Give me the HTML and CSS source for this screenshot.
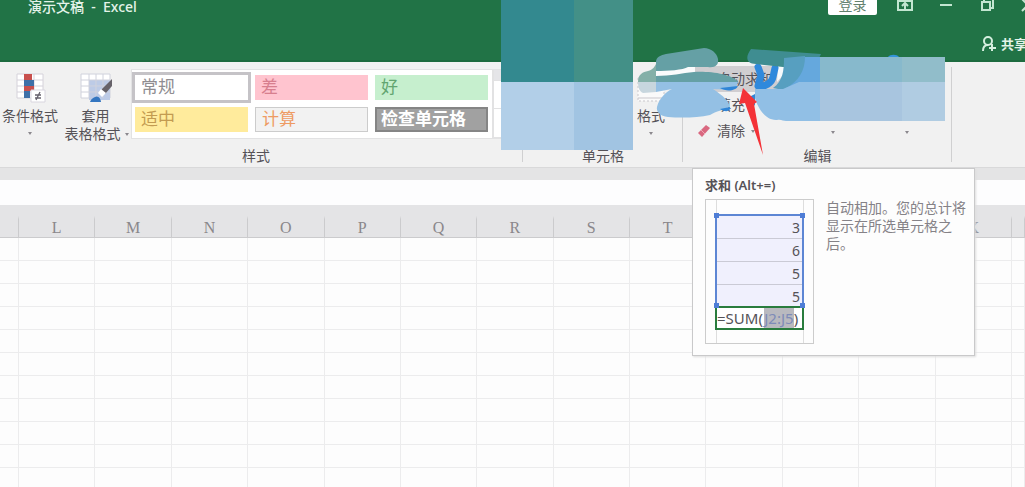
FILE: index.html
```html
<!DOCTYPE html>
<html lang="zh-CN">
<head>
<meta charset="utf-8">
<meta name="viewport" content="width=device-width, initial-scale=1">
<title>演示文稿 - Excel</title>
<link rel="stylesheet" href="styles.css">
</head>
<body>
<div class="app">
  <header class="titlebar">
    <div class="title-row">
      <h1 class="title">演示文稿 &nbsp;- &nbsp;Excel</h1>
      <div class="window-controls">
        <button class="login">登录</button>
        <button class="win-btn" aria-label="功能区显示选项"><svg width="18" height="14" viewBox="0 0 18 14" fill="none" stroke="#c3e6d1" stroke-width="2"><path d="M2 1H16V12H2ZM2 3H16M9 11V5M6 8L9 5L12 8"/></svg></button>
        <button class="win-btn" aria-label="最小化"><svg width="14" height="14" viewBox="0 0 14 14" stroke="#c3e6d1" stroke-width="2"><path d="M1 7H13"/></svg></button>
        <button class="win-btn" aria-label="还原"><svg width="14" height="14" viewBox="0 0 14 14" fill="none" stroke="#c3e6d1" stroke-width="2"><path d="M2 4H10V12H2ZM4 3V1H13V10H11"/></svg></button>
        <button class="win-btn" aria-label="关闭"><svg width="14" height="14" viewBox="0 0 14 14" stroke="#c3e6d1" stroke-width="2"><path d="M1 1L13 13M1 13L13 1"/></svg></button>
      </div>
    </div>
    <div class="share-row">
      <button class="share"><svg width="16" height="18" viewBox="0 0 16 18" fill="none" stroke="#d5efdf" stroke-width="2"><circle cx="7" cy="6" r="4"/><path d="M2 16C2 12 4 10 7 10M11 9V16M8 13H15"/></svg>共享</button>
    </div>
  </header>

  <section class="ribbon" aria-label="开始">
    <div class="group styles-group">
      <div class="group-body">
        <button class="big-btn cond">
          <svg width="32" height="32" viewBox="0 0 32 32"><path fill="#fff" stroke="#d5d2da" d="M3 3H29V27H3Z"/><path stroke="#d5d2da" d="M3 9H29M3 15H29M3 21H29M20 3V27"/><path fill="#c8504d" d="M10 3H18V9H10ZM10 15H20V20H10Z"/><path fill="#3e70a8" d="M10 9H20V15H10ZM10 20H16V27H10Z"/><path fill="#fff" stroke="#d9d6df" d="M17 19H31V31H17Z"/><path fill="none" stroke="#65616c" stroke-width="1.3" d="M21 24H27M21 27H27M26 21L22 29"/></svg>
          <span>条件格式</span><i class="caret"></i>
        </button>
        <button class="big-btn table-style">
          <svg width="36" height="32" viewBox="0 0 36 32"><path fill="#fff" stroke="#d0d2dc" d="M3 3H32V27H3Z"/><path fill="#bdcbe6" d="M11 9H32V29H11Z"/><path fill="none" stroke="#d0d2dc" d="M3 9H32M3 15H32M3 21H32M11 3V27M18 3V27M25 3V27"/><path fill="#666269" d="M34 8V15L27 23L23 19Z"/><path fill="#fff" d="M23 18L28 22L24 26L20 22Z"/><path fill="#3476c0" d="M12 31C13 28 15 27 17 26C20 24 23 28 23 31Z"/></svg>
          <span>套用</span><span class="caret-line">表格格式<i class="caret"></i></span>
        </button>
        <div class="gallery">
          <button class="cell normal">常规</button>
          <button class="cell bad">差</button>
          <button class="cell good">好</button>
          <button class="cell neutral">适中</button>
          <button class="cell calc">计算</button>
          <button class="cell check">检查单元格</button>
        </div>
        <div class="gallery-scroll"><button aria-label="向上"></button><button aria-label="向下"><i class="caret"></i></button><button aria-label="更多"><i class="caret"></i></button></div>
      </div>
      <h2 class="group-name">样式</h2>
    </div>
    <div class="group cells-group">
      <div class="group-body">
        <button class="big-btn format">
          <svg width="32" height="32" viewBox="0 0 32 32"><path fill="#fafafa" stroke="#c9c7cc" stroke-dasharray="2 2" d="M3 7H29V30H3Z"/><path stroke="#c9c7cc" d="M3 27H29"/></svg>
          <span>格式</span><i class="caret"></i>
        </button>
      </div>
      <h2 class="group-name">单元格</h2>
    </div>
    <div class="group edit-group">
      <div class="group-body">
        <div class="commands">
          <button class="command active"><svg width="14" height="14" viewBox="0 0 14 14"><path fill="none" stroke="#5c595e" stroke-width="2" d="M13 2H2L7 7L2 12H13"/></svg>自动求和</button>
          <button class="command"><svg width="14" height="14" viewBox="0 0 14 14"><path fill="#3f8ed4" d="M5 1H9V7H13L7 13L1 7H5Z"/></svg>填充</button>
          <button class="command"><svg width="14" height="14" viewBox="0 0 14 14"><path fill="#d96880" d="M9 1L13 4L5 13L1 9Z"/><path stroke="#f0a6b3" d="M4 6L8 10"/></svg>清除<i class="caret"></i></button>
        </div>
        <button class="big-btn sort"><span>排序和筛选</span><i class="caret"></i></button>
        <button class="big-btn find"><span>查找和选择</span><i class="caret"></i></button>
      </div>
      <h2 class="group-name">编辑</h2>
    </div>
    <div class="ribbon-rest"></div>
  </section>

  <main class="sheet">
    <input class="formula" aria-label="编辑栏">
    <table class="grid">
      <colgroup><col class="edge-left"><col span="13"><col class="edge-right"></colgroup>
      <thead><tr><th></th><th>L</th><th>M</th><th>N</th><th>O</th><th>P</th><th>Q</th><th>R</th><th>S</th><th>T</th><th>U</th><th>V</th><th>W</th><th>X</th><th></th></tr></thead>
      <tbody id="rows"></tbody>
    </table>
  </main>

  <svg class="marks" width="1025" height="170" viewBox="0 0 1025 170" aria-hidden="true">
    <path fill="#33898f" d="M501 0H574V82H501Z"/><path fill="#439087" d="M574 0H633V82H574Z"/>
    <path fill="#b2cfe8" d="M501 82H574V150H501Z"/><path fill="#a1c4e2" d="M574 82H633V150H574Z"/>
    <path fill="#fafbfc" d="M656 69L695 65V73L656 77Z"/>
    <path fill="#65a0a5" d="M656 71V62C656 57 661 55 666 54L704 48C711 48 717 53 718 59C719 65 715 68 708 67H688C683 70 668 71 656 71Z"/>
    <path fill="#84b0a8" d="M638 82C638 74 643 72 648 71C653 70 655 66 656 64V82Z"/>
    <path fill="#c7d6de" d="M638 82H656V92L643 93C639 91 638 87 638 82Z"/>
    <path fill="#65a0a5" d="M656 76C671 76 682 73 694 72C709 71 733 74 738 82H656Z"/>
    <path fill="#94c0e4" d="M656 82H738L736 88C730 90 723 90 713 89C722 95 731 102 729 107C724 110 716 111 710 115C697 118 680 118 668 117C660 116 656 112 657 107C659 98 667 91 672 89L656 92Z"/>
    <path fill="#f7fafc" d="M778 66H785L784 74L777 82Z"/>
    <path fill="none" stroke="#2f89dc" stroke-width="7" stroke-linecap="round" stroke-linejoin="round" d="M758 67L761 75L758 86C765 87 772 83 773 77L775 68"/>
    <path fill="#2f85d7" d="M749 97L755 94V106ZM720 88L738 86C736 91 726 92 720 88ZM720 109L730 107C731 111 726 113 720 109Z"/>
    <path fill="#3f8d91" d="M751 49L821 54C818 61 814 67 808 67H783L756 64C746 64 745 57 751 49Z"/>
    <path fill="#579fc0" d="M784 58L805 56V64C804 75 798 86 783 90L773 88C783 81 784 70 784 58Z"/>
    <path fill="#65a8dd" d="M805 57H820V121H786V88C798 82 805 71 805 57Z"/>
    <path fill="#91bfe5" d="M755 89H783L799 82H820V121H786C783 121 781 119 777 120C765 121 757 106 755 98Z"/>
    <path fill="#87b9cc" d="M820 57H902V82H820Z"/><path fill="#91bdca" d="M902 57H945V82H902Z"/>
    <path fill="#a8c5df" d="M820 82H902V121H820Z"/><path fill="#b0cce2" d="M902 82H945V121H902Z"/>
    <path fill="#3395db" d="M888 57C890 54 897 54 899 57Z"/>
    <path fill="#f43237" d="M743 88L739 104L745 103L763 155L754 104L757 102Z"/>
  </svg>

  <aside class="tooltip" role="tooltip">
    <h3 class="tip-title">求和 (Alt+=)</h3>
    <div class="tip-content">
      <div class="sum-demo">
        <div class="sum-values"><span>3</span><span>6</span><span>5</span><span>5</span><i class="handle tl"></i><i class="handle tr"></i><i class="handle bl"></i><i class="handle br"></i></div>
        <div class="sum-formula">=SUM(<mark>J2:J5</mark>)</div>
      </div>
      <p class="tip-text">自动相加。您的总计将显示在所选单元格之后。</p>
    </div>
  </aside>
</div>
<script src="grid.js"></script>
</body>
</html>
```
FILE: styles.css
```css
* { box-sizing: border-box; }
body { margin: 0; overflow: hidden; background: #fdfdfd; color: #555257; font: 14px/18px "Noto Sans", "Noto Sans CJK SC", sans-serif; }
button { padding: 0; border: 0; background: none; color: inherit; font: inherit; white-space: nowrap; }
svg { display: block; flex: none; }
h1, h2, h3, p { margin: 0; font-weight: 400; }
.app { position: relative; min-height: 100vh; }

.titlebar { height: 62px; background: #217346; color: #e4f3e9; border-bottom: 2px solid #1d6b3f; overflow: hidden; }
.title-row { display: flex; justify-content: space-between; height: 32px; }
.title { padding-left: 28px; font-size: 14px; line-height: 14px; font-weight: 500; }
.window-controls { display: flex; align-items: flex-start; gap: 23px; margin-right: -12px; }
.login { width: 49px; height: 15px; background: #fff; color: #62806d; line-height: 10px; border-radius: 0 0 2px 2px; padding-bottom: 5px; margin-right: -4px; }
.win-btn { height: 14px; width: 18px; display: flex; justify-content: center; margin-top: -2px; }
.share-row { display: flex; justify-content: flex-end; margin-right: -2px; }
.share { display: flex; align-items: center; gap: 4px; height: 24px; font-weight: 600; font-size: 13px; }

.ribbon { display: flex; height: 106px; background: #f1f1f1; border-bottom: 1px solid #d9d9da; }
.group { position: relative; display: flex; flex-direction: column; justify-content: space-between; padding-bottom: 1px; }
.group::after { content: ""; position: absolute; right: 0; top: 5px; bottom: 5px; border-right: 1px solid #d0d0d1; }
.group-body { display: flex; }
.group-name { font-size: 14px; line-height: 20px; text-align: center; }
.styles-group { width: 523px; flex: none; }
.styles-group .group-name { padding-right: 11px; }
.cells-group { width: 160px; flex: none; }
.edit-group { width: 269px; flex: none; }
.ribbon-rest { flex: 1; }
.big-btn { display: flex; flex-direction: column; align-items: center; flex: none; }
.big-btn > span { line-height: 18px; }
.caret { display: inline-block; border: 2px solid transparent; border-top: 3px solid #8b888d; border-bottom: 0; }
.cond { width: 60px; padding-top: 9px; }
.cond > .caret, .format > .caret { margin-top: 7px; }
.cond svg, .format svg, .table-style svg { margin-bottom: 4px; }
.table-style { width: 71px; padding-top: 9px; }
.caret-line { display: flex; align-items: center; gap: 4px; padding-left: 2px; }
.gallery { display: grid; grid-template-columns: repeat(3, 113px); align-content: start; gap: 7px; padding: 5px 4px 5px 3px; height: 70px; margin-top: 7px; background: #fff; border: 1px solid #e2e2e3; }
.cell { text-align: left; padding-left: 6px; font: 17px/24px "Liberation Serif", "Noto Sans CJK SC", serif; height: 25px; }
.normal { outline: 3px solid #c5c3c7; color: #8f8d91; }
.bad { background: #ffc4cf; color: #d77f8e; }
.good { background: #c6efce; color: #62a570; }
.neutral { background: #ffeb9c; color: #c39b51; }
.calc { background: #f2f2f2; border: 1px solid #ccc; color: #ee9b63; }
.check { background: #a1a1a1; border: 2px solid #858585; color: #fff; padding-left: 4px; line-height: 20px; font-weight: 600; }
.gallery-scroll { flex: 1; display: grid; height: 70px; margin: 7px 8px 0 0; background: #fff; border: 1px solid #e2e2e3; }
.gallery-scroll button { border-bottom: 1px solid #e2e2e3; }
.gallery-scroll button:first-child { background: #e5e5e8; }
.format { width: 46px; margin-left: 105px; padding-top: 9px; }
.commands { width: 106px; padding: 4px 0 0 12px; }
.command { display: flex; align-items: center; gap: 6px; width: 94px; height: 26px; padding-left: 2px; }
.active { background: #d0ced1; }
.sort, .find { width: 74px; font-size: 13px; padding-top: 43px; }
.sort { margin-left: 7px; }
.sort .caret, .find .caret { margin-top: 8px; }

.sheet { padding-top: 12px; background: #e4e4e5; }
.formula { display: block; width: 100%; height: 25px; padding: 0 8px; border: 0; background: #fdfdfe; }
.grid { width: 100%; table-layout: fixed; border-collapse: separate; border-spacing: 0; background: #fdfdfd; }
.edge-left { width: 19px; }
.edge-right { width: 13px; }
.grid th { height: 33px; padding: 14px 0 0; background: #e4e4e6; border-bottom: 1px solid #cbcbcc; border-right: 1px solid; border-image: linear-gradient(#e4e4e6 35%, #cbcbcd 45%) 1; color: #8a878b; font: 16px/18px "Liberation Serif", serif; }
.grid td { height: 23px; padding: 0; border-right: 1px solid #ececed; border-bottom: 1px solid #ececed; }

.marks { position: absolute; left: 0; top: 0; pointer-events: none; }

.tooltip { position: absolute; left: 692px; top: 168px; width: 283px; padding: 6px 7px 11px 12px; background: #fdfdfd; border: 1px solid #c9c9ca; box-shadow: 1px 1px 2px #ddd; }
.tip-title { font-size: 13px; line-height: 20px; font-weight: 600; margin-bottom: 4px; }
.tip-content { display: flex; gap: 12px; }
.sum-demo { width: 109px; flex: none; height: 145px; padding: 14px 9px 0 9px; border: 1px solid #ccc; background: linear-gradient(90deg, transparent 10px, #ddd 10px 11px, transparent 11px 97px, #ddd 97px 98px, transparent 98px); }
.sum-values { position: relative; border: 2px solid #5d86d4; border-bottom: 0; background: #f0f0fd; display: grid; }
.sum-values span { height: 23px; line-height: 24px; border-bottom: 1px solid #cacad5; text-align: right; padding-right: 2px; }
.sum-values span:nth-of-type(4) { height: 21px; border: 0; }
.handle { position: absolute; width: 5px; height: 5px; background: #4e7dd6; }
.tl { left: -3px; top: -3px; }
.tr { right: -3px; top: -3px; }
.bl { left: -3px; bottom: -2px; }
.br { right: -3px; bottom: -2px; }
.sum-formula { height: 24px; border: 2px solid #297c3d; background: #fff; font-size: 15px; line-height: 20px; white-space: nowrap; }
.sum-formula mark { background: #b9b9bf; color: #7e8bb8; }
.tip-text { font-size: 14px; line-height: 18px; color: #858287; }
```
FILE: grid.js
```js
const body = document.getElementById("rows");
for (let r = 0; r < 11; r += 1) {
  const row = body.insertRow();
  for (let c = 0; c < 15; c += 1) row.insertCell();
}
```
